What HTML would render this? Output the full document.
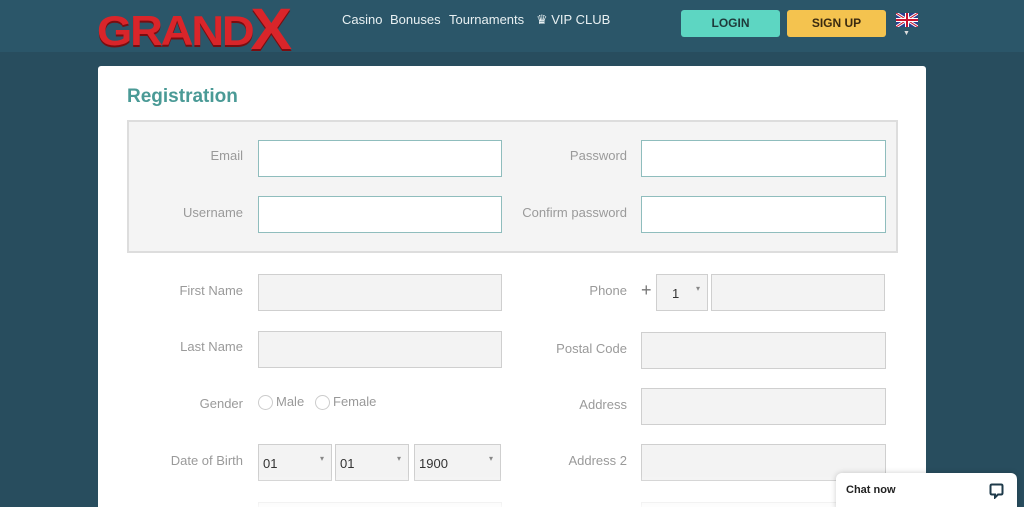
<!DOCTYPE html><html><head><meta charset="utf-8"><style>
*{box-sizing:border-box;margin:0;padding:0}
html,body{width:1024px;height:507px;overflow:hidden}
body{background:#284d5e;font-family:"Liberation Sans",sans-serif;position:relative}
.hdr{position:absolute;left:0;top:0;width:1024px;height:52px;background:#2b5669}
.a{position:absolute}
.nav{color:#e8f0f2;font-size:13px;top:12px}
.card{left:98px;top:66px;width:828px;height:441px;background:#fff;border-radius:3px 3px 0 0}
.lbl{color:#9a9a9a;font-size:13px;text-align:right;width:200px}
.in{border:1px solid #cfcfcf;background:#f3f3f3;height:37px}
.inw{border:1px solid #8fbdbd;background:#fff;height:37px}
.sel{font-size:13px;color:#333;padding:11px 0 0 4px}
.sel:after{content:"▾";position:absolute;right:7px;top:9px;font-size:8px;color:#888}
.rad{width:15px;height:15px;border:1px solid #ccc;border-radius:50%;background:#fff}
</style></head><body>
<div class="hdr"></div>
<div class="a" style="left:97px;top:5px;font:900 42px/42px 'Liberation Sans';color:#d9252a;letter-spacing:-2px;text-shadow:0 2px 0 #7a0d10;transform:scaleX(1.08);transform-origin:left">GRAND<span style="font-size:58px;position:relative;top:4px;margin-left:-2px">X</span></div>
<div class="a nav" style="left:342px">Casino</div>
<div class="a nav" style="left:390px">Bonuses</div>
<div class="a nav" style="left:449px">Tournaments</div>
<div class="a nav" style="left:536px">♛ VIP CLUB</div>
<div class="a" style="left:681px;top:10px;width:99px;height:27px;background:#5dd6c2;border-radius:3px;font:bold 12px 'Liberation Sans';color:#1e3a3a;text-align:center;line-height:27px">LOGIN</div>
<div class="a" style="left:787px;top:10px;width:99px;height:27px;background:#f4c34f;border-radius:3px;font:bold 12px 'Liberation Sans';color:#3a2a10;text-align:center;line-height:27px">SIGN UP</div>
<svg class="a" style="left:896px;top:13px" width="22" height="14" viewBox="0 0 22 14"><rect width="22" height="14" fill="#2a3f8f"/><path d="M0 0L22 14M22 0L0 14" stroke="#fff" stroke-width="3"/><path d="M0 0L22 14M22 0L0 14" stroke="#c8102e" stroke-width="1"/><path d="M11 0V14M0 7H22" stroke="#fff" stroke-width="4"/><path d="M11 0V14M0 7H22" stroke="#c8102e" stroke-width="2"/></svg>
<div class="a" style="left:903px;top:30px;color:#ddd;font-size:7px">▼</div>
<div class="a card"></div>
<div class="a" style="left:127px;top:86px;font:bold 19px 'Liberation Sans';color:#4a9a96">Registration</div>
<div class="a" style="left:127px;top:120px;width:771px;height:133px;background:#f4f4f4;border:2px solid #ddd"></div>
<div class="a lbl" style="left:43px;top:148px">Email</div>
<div class="a inw" style="left:258px;top:140px;width:244px"></div>
<div class="a lbl" style="left:43px;top:205px">Username</div>
<div class="a inw" style="left:258px;top:196px;width:244px"></div>
<div class="a lbl" style="left:427px;top:148px">Password</div>
<div class="a inw" style="left:641px;top:140px;width:245px"></div>
<div class="a lbl" style="left:427px;top:205px">Confirm password</div>
<div class="a inw" style="left:641px;top:196px;width:245px"></div>

<div class="a lbl" style="left:43px;top:283px">First Name</div>
<div class="a in" style="left:258px;top:274px;width:244px"></div>
<div class="a lbl" style="left:43px;top:339px">Last Name</div>
<div class="a in" style="left:258px;top:331px;width:244px"></div>
<div class="a lbl" style="left:43px;top:396px">Gender</div>
<div class="a rad" style="left:258px;top:395px"></div>
<div class="a" style="left:276px;top:394px;font-size:13px;color:#999">Male</div>
<div class="a rad" style="left:315px;top:395px"></div>
<div class="a" style="left:333px;top:394px;font-size:13px;color:#999">Female</div>
<div class="a lbl" style="left:43px;top:453px">Date of Birth</div>
<div class="a in sel" style="left:258px;top:444px;width:74px">01</div>
<div class="a in sel" style="left:335px;top:444px;width:74px">01</div>
<div class="a in sel" style="left:414px;top:444px;width:87px">1900</div>
<div class="a in" style="left:258px;top:502px;width:244px"></div>

<div class="a lbl" style="left:427px;top:283px">Phone</div>
<div class="a" style="left:641px;top:280px;font-size:18px;color:#777">+</div>
<div class="a in sel" style="left:656px;top:274px;width:52px;padding-left:15px">1</div>
<div class="a in" style="left:711px;top:274px;width:174px"></div>
<div class="a lbl" style="left:427px;top:341px">Postal Code</div>
<div class="a in" style="left:641px;top:332px;width:245px"></div>
<div class="a lbl" style="left:427px;top:397px">Address</div>
<div class="a in" style="left:641px;top:388px;width:245px"></div>
<div class="a lbl" style="left:427px;top:453px">Address 2</div>
<div class="a in" style="left:641px;top:444px;width:245px"></div>
<div class="a in" style="left:641px;top:502px;width:245px"></div>
<div class="a" style="left:98px;top:475px;width:828px;height:32px;background:linear-gradient(rgba(255,255,255,0),rgba(255,255,255,.85))"></div>
<div class="a" style="left:836px;top:473px;width:181px;height:40px;background:#fff;border-radius:6px;box-shadow:0 0 6px rgba(0,0,0,.2)"></div>
<div class="a" style="left:846px;top:484px;font:bold 11px 'Liberation Sans';color:#222">Chat now</div>
<svg class="a" style="left:989px;top:483px" width="15" height="16" viewBox="0 0 15 16"><path d="M3 1.5H12Q13.5 1.5 13.5 3V10Q13.5 11.5 12 11.5H9L6 14.5V11.5H3Q1.5 11.5 1.5 10V3Q1.5 1.5 3 1.5Z" fill="none" stroke="#1e3a4a" stroke-width="2"/></svg>
</body></html>
